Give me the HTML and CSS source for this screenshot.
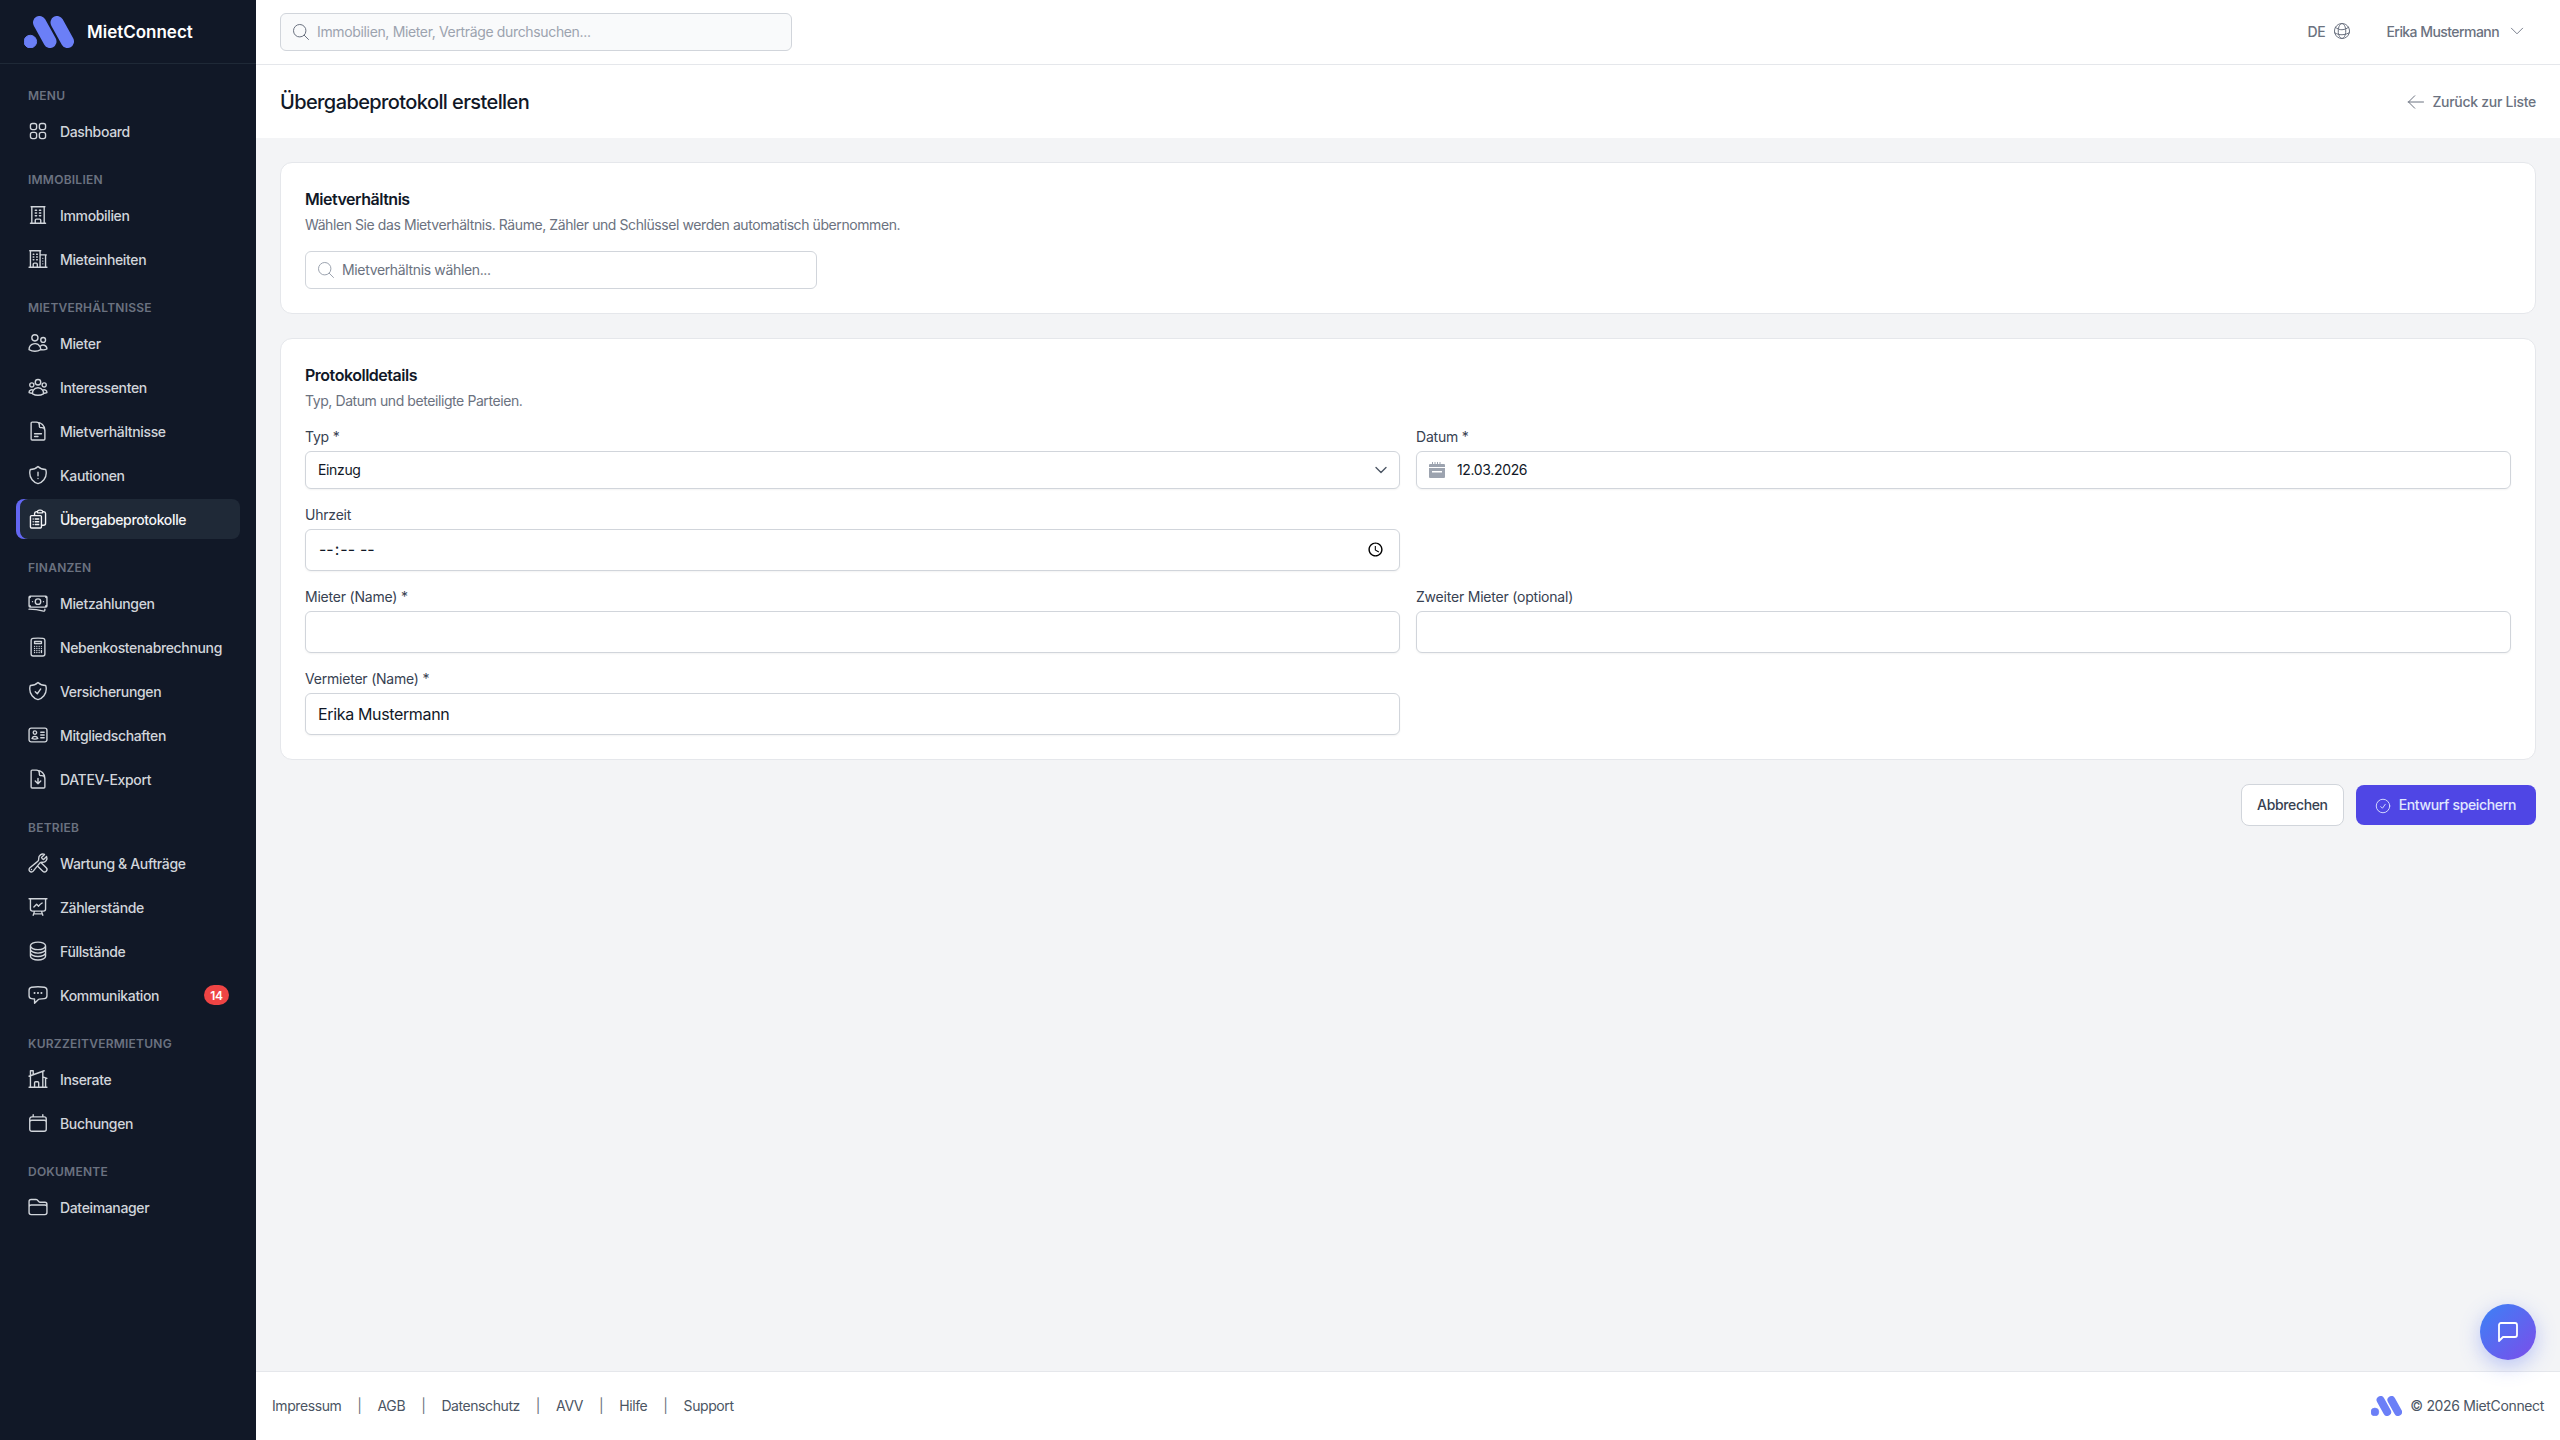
FILE: index.html
```html
<!DOCTYPE html>
<html lang="de">
<head>
<meta charset="utf-8">
<title>Übergabeprotokoll erstellen – MietConnect</title>
<link rel="stylesheet" href="styles.css">
</head>
<body>
<svg class="sprite" aria-hidden="true">
  <symbol id="logo" viewBox="0 0 50 32"><circle cx="6.3" cy="25.6" r="6.3"/><path class="pill" d="M15.5 6.500 26 25.5M33 6.500 43.500 25.500"/></symbol>
  <symbol id="i-dash" viewBox="0 0 24 24"><path d="M3.75 6A2.25 2.25 0 016 3.75h2.25A2.25 2.25 0 0110.5 6v2.25a2.25 2.25 0 01-2.25 2.25H6a2.25 2.25 0 01-2.25-2.25V6zM3.75 15.75A2.25 2.25 0 016 13.5h2.25a2.25 2.25 0 012.25 2.25V18a2.25 2.25 0 01-2.25 2.25H6A2.25 2.25 0 013.75 18v-2.25zM13.5 6a2.25 2.25 0 012.25-2.25H18A2.25 2.25 0 0120.25 6v2.25A2.25 2.25 0 0118 10.5h-2.25a2.25 2.25 0 01-2.25-2.25V6zM13.5 15.75a2.25 2.25 0 012.25-2.25H18a2.25 2.25 0 012.25 2.25V18A2.25 2.25 0 0118 20.25h-2.25A2.25 2.25 0 0113.5 18v-2.25z"/></symbol>
  <symbol id="i-office" viewBox="0 0 24 24"><path d="M3.75 21h16.5M4.5 3h15M5.25 3v18m13.5-18v18M9 6.75h1.5m-1.5 3h1.5m-1.5 3h1.5m3-6H15m-1.5 3H15m-1.5 3H15M9 21v-3.375c0-.621.504-1.125 1.125-1.125h3.75c.621 0 1.125.504 1.125 1.125V21"/></symbol>
  <symbol id="i-office2" viewBox="0 0 24 24"><path d="M2.25 21h19.5m-18-18v18m10.5-18v18m6-13.5V21M6.75 6.75h.75m-.75 3h.75m-.75 3h.75m3-6h.75m-.75 3h.75m-.75 3h.75M6.750 21v-3.375c0-.621.504-1.125 1.125-1.125h2.25c.621 0 1.125.504 1.125 1.125V21M3 3h12m-.75 4.500H21m-3.750 3.750h.008v.008h-.008v-.008zm0 3h.008v.008h-.008v-.008zm0 3h.008v.008h-.008v-.008z"/></symbol>
  <symbol id="i-users" viewBox="0 0 24 24"><path d="M15 19.128a9.380 9.380 0 002.625.372 9.337 9.337 0 004.121-.952 4.125 4.125 0 00-7.533-2.493M15 19.128v-.003c0-1.113-.285-2.160-.786-3.070M15 19.128v.106A12.318 12.318 0 018.624 21c-2.331 0-4.512-.645-6.374-1.766l-.001-.109a6.375 6.375 0 0111.964-3.070M12 6.375a3.375 3.375 0 11-6.750 0 3.375 3.375 0 016.750 0zm8.250 2.250a2.625 2.625 0 11-5.250 0 2.625 2.625 0 015.250 0z"/></symbol>
  <symbol id="i-group" viewBox="0 0 24 24"><path d="M18 18.720a9.094 9.094 0 003.741-.479 3 3 0 00-4.682-2.720m.94 3.198l.001.031c0 .225-.012.447-.037.666A11.944 11.944 0 0112 21c-2.170 0-4.207-.576-5.963-1.584A6.062 6.062 0 016 18.719m12 0a5.971 5.971 0 00-.941-3.197m0 0A5.995 5.995 0 0012 12.750a5.995 5.995 0 00-5.058 2.772m0 0a3 3 0 00-4.681 2.720 8.986 8.986 0 003.740.477m.94-3.197a5.971 5.971 0 00-.94 3.197M15 6.750a3 3 0 11-6 0 3 3 0 016 0zm6 3a2.250 2.250 0 11-4.500 0 2.250 2.250 0 014.500 0zm-13.500 0a2.250 2.250 0 11-4.500 0 2.250 2.250 0 014.500 0z"/></symbol>
  <symbol id="i-doc" viewBox="0 0 24 24"><path d="M19.500 14.250v-2.625a3.375 3.375 0 00-3.375-3.375h-1.500A1.125 1.125 0 0113.500 7.125v-1.500a3.375 3.375 0 00-3.375-3.375H8.250m0 12.750h7.500m-7.500 3H12M10.500 2.250H5.625c-.621 0-1.125.504-1.125 1.125v17.250c0 .621.504 1.125 1.125 1.125h12.750c.621 0 1.125-.504 1.125-1.125V11.250a9 9 0 00-9-9z"/></symbol>
  <symbol id="i-shield-x" viewBox="0 0 24 24"><path d="M12 9v3.750m0-10.036A11.959 11.959 0 013.598 6 11.990 11.990 0 003 9.750c0 5.592 3.824 10.290 9 11.622 5.176-1.332 9-6.030 9-11.622 0-1.310-.210-2.570-.598-3.750h-.152c-3.196 0-6.100-1.249-8.250-3.286zm0 13.036h.008v.008H12v-.008z"/></symbol>
  <symbol id="i-clip" viewBox="0 0 24 24"><path d="M9 12h3.750M9 15h3.750M9 18h3.750m3 .75H18a2.250 2.250 0 002.250-2.250V6.108c0-1.135-.845-2.098-1.976-2.192a48.424 48.424 0 00-1.123-.08m-5.801 0c-.065.21-.1.433-.1.664 0 .414.336.75.75.75h4.500a.75.75 0 00.75-.75 2.250 2.250 0 00-.1-.664m-5.800 0A2.251 2.251 0 0113.500 2.250H15c1.012 0 1.867.668 2.150 1.586m-5.800 0c-.376.023-.75.05-1.124.08C9.095 4.010 8.250 4.973 8.250 6.108V8.250m0 0H4.875c-.621 0-1.125.504-1.125 1.125v11.250c0 .621.504 1.125 1.125 1.125h9.750c.621 0 1.125-.504 1.125-1.125V9.375c0-.621-.504-1.125-1.125-1.125H8.250zM6.750 12h.008v.008H6.750V12zm0 3h.008v.008H6.750V15zm0 3h.008v.008H6.750V18z"/></symbol>
  <symbol id="i-money" viewBox="0 0 24 24"><path d="M2.250 18.750a60.070 60.070 0 0115.797 2.101c.727.198 1.453-.342 1.453-1.096V18.750M3.750 4.500v.75A.75.75 0 013 6h-.75m0 0v-.375c0-.621.504-1.125 1.125-1.125H20.250M2.250 6v9m18-10.500v.75c0 .414.336.75.75.75h.75m-1.500-1.500h.375c.621 0 1.125.504 1.125 1.125v9.750c0 .621-.504 1.125-1.125 1.125h-.375m1.500-1.500H21a.75.75 0 00-.75.75v.75m0 0H3.750m0 0h-.375a1.125 1.125 0 01-1.125-1.125V15m1.500 1.500v-.75A.75.75 0 003 15h-.75M15 10.500a3 3 0 11-6 0 3 3 0 016 0zm3 0h.008v.008H18V10.500zm-12 0h.008v.008H6V10.500z"/></symbol>
  <symbol id="i-calc" viewBox="0 0 24 24"><path d="M15.750 15.750V18m-7.500-6.750h.008v.008H8.250v-.008zm0 2.250h.008v.008H8.250V13.500zm0 2.250h.008v.008H8.250v-.008zm0 2.250h.008v.008H8.250V18zm2.498-6.750h.007v.008h-.007v-.008zm0 2.250h.007v.008h-.007V13.500zm0 2.250h.007v.008h-.007v-.008zm0 2.250h.007v.008h-.007V18zm2.504-6.750h.008v.008h-.008v-.008zm0 2.250h.008v.008h-.008V13.500zm0 2.250h.008v.008h-.008v-.008zm0 2.250h.008v.008h-.008V18zm2.498-6.750h.008v.008h-.008v-.008zm0 2.250h.008v.008h-.008V13.500zM8.250 6h7.500v2.250h-7.500V6zM12 2.250c-1.892 0-3.758.11-5.593.322C5.307 2.700 4.500 3.650 4.500 4.757V19.500a2.250 2.250 0 002.250 2.250h10.500a2.250 2.250 0 002.250-2.250V4.757c0-1.108-.806-2.057-1.907-2.185A48.507 48.507 0 0012 2.250z"/></symbol>
  <symbol id="i-shield-c" viewBox="0 0 24 24"><path d="M9 12.750L11.250 15 15 9.750m-3-7.036A11.959 11.959 0 013.598 6 11.990 11.990 0 003 9.749c0 5.592 3.824 10.290 9 11.623 5.176-1.332 9-6.030 9-11.622 0-1.310-.21-2.571-.598-3.751h-.152c-3.196 0-6.100-1.248-8.250-3.285z"/></symbol>
  <symbol id="i-id" viewBox="0 0 24 24"><path d="M15 9h3.750M15 12h3.750M15 15h3.750M4.500 19.500h15a2.250 2.250 0 002.250-2.250V6.750A2.250 2.250 0 0019.500 4.500h-15a2.250 2.250 0 00-2.250 2.250v10.500A2.250 2.250 0 004.500 19.500zm6-10.125a1.875 1.875 0 11-3.750 0 1.875 1.875 0 013.750 0zm1.294 6.336a6.721 6.721 0 01-3.170.789 6.721 6.721 0 01-3.168-.789 3.376 3.376 0 016.338 0z"/></symbol>
  <symbol id="i-docdown" viewBox="0 0 24 24"><path d="M19.500 14.250v-2.625a3.375 3.375 0 00-3.375-3.375h-1.500A1.125 1.125 0 0113.500 7.125v-1.500a3.375 3.375 0 00-3.375-3.375H8.250m.75 12l3 3m0 0l3-3m-3 3v-6m-1.500-9H5.625c-.621 0-1.125.504-1.125 1.125v17.250c0 .621.504 1.125 1.125 1.125h12.750c.621 0 1.125-.504 1.125-1.125V11.250a9 9 0 00-9-9z"/></symbol>
  <symbol id="i-wrench" viewBox="0 0 24 24"><path d="M11.420 15.170L17.250 21A2.652 2.652 0 0021 17.250l-5.877-5.877M11.420 15.170l2.496-3.030c.317-.384.74-.626 1.208-.766M11.420 15.170l-4.655 5.653a2.548 2.548 0 11-3.586-3.586l6.837-5.630m5.108-.233c.55-.164 1.163-.188 1.743-.14a4.500 4.500 0 004.486-6.336l-3.276 3.277a3.004 3.004 0 01-2.250-2.250l3.276-3.276a4.500 4.500 0 00-6.336 4.486c.091 1.076-.071 2.264-.904 2.950l-.102.085-1.745 1.437M4.867 19.125h.008v.008h-.008v-.008z"/></symbol>
  <symbol id="i-chart" viewBox="0 0 24 24"><path d="M3.750 3v11.250A2.250 2.250 0 006 16.500h2.250M3.750 3h-1.500m1.500 0h16.500m0 0h1.500m-1.500 0v11.250A2.250 2.250 0 0118 16.500h-2.250m-7.500 0h7.500m-7.500 0l-1 3m8.500-3l1 3m0 0l.5 1.500m-.5-1.500h-9.500m0 0l-.5 1.500m.75-9l3-3 2.148 2.148A12.061 12.061 0 0116.500 7.605"/></symbol>
  <symbol id="i-stack" viewBox="0 0 24 24"><path d="M20.250 6.375c0 2.278-3.694 4.125-8.250 4.125S3.750 8.653 3.750 6.375m16.500 0c0-2.278-3.694-4.125-8.250-4.125S3.750 4.097 3.750 6.375m16.500 0v11.250c0 2.278-3.694 4.125-8.250 4.125s-8.250-1.847-8.250-4.125V6.375m16.500 0v3.750m-16.500-3.750v3.750m16.500 0v3.750C20.250 16.153 16.556 18 12 18s-8.250-1.847-8.250-4.125v-3.750m16.500 0c0 2.278-3.694 4.125-8.250 4.125s-8.250-1.847-8.250-4.125"/></symbol>
  <symbol id="i-chat" viewBox="0 0 24 24"><path d="M8.625 9.750a.375.375 0 11-.75 0 .375.375 0 01.75 0zm0 0H8.250m4.125 0a.375.375 0 11-.75 0 .375.375 0 01.75 0zm0 0H12m4.125 0a.375.375 0 11-.75 0 .375.375 0 01.75 0zm0 0h-.375m-13.500 3.010c0 1.600 1.123 2.994 2.707 3.227 1.087.16 2.185.283 3.293.369V21l4.184-4.183a1.140 1.140 0 01.778-.332 48.294 48.294 0 005.830-.498c1.585-.233 2.708-1.626 2.708-3.228V6.741c0-1.602-1.123-2.995-2.707-3.228A48.394 48.394 0 0012 3c-2.392 0-4.744.175-7.043.513C3.373 3.746 2.250 5.140 2.250 6.741v6.018z"/></symbol>
  <symbol id="i-home" viewBox="0 0 24 24"><path d="M8.250 21v-4.875c0-.621.504-1.125 1.125-1.125h2.250c.621 0 1.125.504 1.125 1.125V21m0 0h4.500V3.545M12.750 21h7.500V10.750M2.250 21h1.500m18 0h-18M2.250 9l4.500-1.636M18.750 3l-1.500.545m0 6.205l3 1m1.500.5l-1.500-.5M6.750 7.364V3h-3v18m3-13.636l10.500-3.819"/></symbol>
  <symbol id="i-cal" viewBox="0 0 24 24"><path d="M6.750 3v2.250M17.250 3v2.250M3 18.750V7.500a2.250 2.250 0 012.250-2.250h13.500A2.250 2.250 0 0121 7.500v11.250m-18 0A2.250 2.250 0 005.250 21h13.500A2.250 2.250 0 0021 18.750m-18 0v-7.500A2.250 2.250 0 015.250 9h13.500A2.250 2.250 0 0121 11.250v7.500"/></symbol>
  <symbol id="i-folder" viewBox="0 0 24 24"><path d="M2.250 12.750V12A2.250 2.250 0 014.500 9.750h15A2.250 2.250 0 0121.750 12v.75m-8.690-6.440l-2.120-2.120a1.500 1.500 0 00-1.061-.44H4.500A2.250 2.250 0 002.250 6v12a2.250 2.250 0 002.250 2.250h15A2.250 2.250 0 0021.750 18V9a2.250 2.250 0 00-2.250-2.250h-5.379a1.500 1.500 0 01-1.060-.44z"/></symbol>
  <symbol id="i-search" viewBox="0 0 24 24"><path d="M21 21l-5.197-5.197m0 0A7.500 7.500 0 105.196 5.196a7.500 7.500 0 0010.607 10.607z"/></symbol>
  <symbol id="i-globe" viewBox="0 0 24 24"><path d="M12 21a9.004 9.004 0 008.716-6.747M12 21a9.004 9.004 0 01-8.716-6.747M12 21c2.485 0 4.500-4.030 4.500-9S14.485 3 12 3m0 18c-2.485 0-4.500-4.030-4.500-9S9.515 3 12 3m0 0a8.997 8.997 0 017.843 4.582M12 3a8.997 8.997 0 00-7.843 4.582m15.686 0A11.953 11.953 0 0112 10.500c-2.998 0-5.740-1.100-7.843-2.918m15.686 0A8.959 8.959 0 0121 12c0 .778-.099 1.533-.284 2.253m0 0A17.919 17.919 0 0112 16.500c-3.162 0-6.133-.815-8.716-2.247m0 0A9.015 9.015 0 013 12c0-1.605.42-3.113 1.157-4.418"/></symbol>
  <symbol id="i-chev" viewBox="0 0 24 24"><path d="M19.500 8.250l-7.500 7.500-7.500-7.500"/></symbol>
  <symbol id="i-back" viewBox="0 0 24 24"><path d="M10.500 19.500L3 12m0 0l7.500-7.500M3 12h18"/></symbol>
  <symbol id="i-check" viewBox="0 0 24 24"><path d="M9 12.750L11.250 15 15 9.750M21 12a9 9 0 11-18 0 9 9 0 0118 0z"/></symbol>
  <symbol id="i-bubble" viewBox="0 0 24 24"><path d="M21 15a2 2 0 01-2 2H7l-4 4V5a2 2 0 012-2h14a2 2 0 012 2z"/></symbol>
  <symbol id="i-calsolid" viewBox="0 0 16 16"><path d="M3 0h1v2h1.500V0h1v2h1.500V0h1v2h1.500V0h1v2H15a1 1 0 0 1 1 1v2H0V3a1 1 0 0 1 1-1h2V0zM0 6h16v9a1 1 0 0 1-1 1H1a1 1 0 0 1-1-1V6zm3 3v1.500h10V9H3z"/></symbol>
</svg>

<div class="app">
  <aside class="sidebar">
    <div class="brand">
      <svg class="brand-logo"><use href="#logo"/></svg>
      <span class="brand-name">MietConnect</span>
    </div>
    <nav class="nav">
      <section class="nav-group">
        <h2 class="nav-title">Menu</h2>
        <a class="nav-item"><svg class="icon"><use href="#i-dash"/></svg>Dashboard</a>
      </section>
      <section class="nav-group">
        <h2 class="nav-title">Immobilien</h2>
        <a class="nav-item"><svg class="icon"><use href="#i-office"/></svg>Immobilien</a>
        <a class="nav-item"><svg class="icon"><use href="#i-office2"/></svg>Mieteinheiten</a>
      </section>
      <section class="nav-group">
        <h2 class="nav-title">Mietverhältnisse</h2>
        <a class="nav-item"><svg class="icon"><use href="#i-users"/></svg>Mieter</a>
        <a class="nav-item"><svg class="icon"><use href="#i-group"/></svg>Interessenten</a>
        <a class="nav-item"><svg class="icon"><use href="#i-doc"/></svg>Mietverhältnisse</a>
        <a class="nav-item"><svg class="icon"><use href="#i-shield-x"/></svg>Kautionen</a>
        <a class="nav-item is-active"><svg class="icon"><use href="#i-clip"/></svg>Übergabeprotokolle</a>
      </section>
      <section class="nav-group">
        <h2 class="nav-title">Finanzen</h2>
        <a class="nav-item"><svg class="icon"><use href="#i-money"/></svg>Mietzahlungen</a>
        <a class="nav-item"><svg class="icon"><use href="#i-calc"/></svg>Nebenkostenabrechnung</a>
        <a class="nav-item"><svg class="icon"><use href="#i-shield-c"/></svg>Versicherungen</a>
        <a class="nav-item"><svg class="icon"><use href="#i-id"/></svg>Mitgliedschaften</a>
        <a class="nav-item"><svg class="icon"><use href="#i-docdown"/></svg>DATEV-Export</a>
      </section>
      <section class="nav-group">
        <h2 class="nav-title">Betrieb</h2>
        <a class="nav-item"><svg class="icon"><use href="#i-wrench"/></svg>Wartung &amp; Aufträge</a>
        <a class="nav-item"><svg class="icon"><use href="#i-chart"/></svg>Zählerstände</a>
        <a class="nav-item"><svg class="icon"><use href="#i-stack"/></svg>Füllstände</a>
        <a class="nav-item"><svg class="icon"><use href="#i-chat"/></svg>Kommunikation<span class="badge">14</span></a>
      </section>
      <section class="nav-group">
        <h2 class="nav-title">Kurzzeitvermietung</h2>
        <a class="nav-item"><svg class="icon"><use href="#i-home"/></svg>Inserate</a>
        <a class="nav-item"><svg class="icon"><use href="#i-cal"/></svg>Buchungen</a>
      </section>
      <section class="nav-group">
        <h2 class="nav-title">Dokumente</h2>
        <a class="nav-item"><svg class="icon"><use href="#i-folder"/></svg>Dateimanager</a>
      </section>
    </nav>
  </aside>

  <div class="main">
    <header class="topbar">
      <div class="global-search">
        <svg class="icon-search"><use href="#i-search"/></svg>
        <input class="plain-input" type="text" placeholder="Immobilien, Mieter, Verträge durchsuchen...">
      </div>
      <div class="topbar-right">
        <button class="top-btn lang">DE<svg class="icon-globe"><use href="#i-globe"/></svg></button>
        <button class="top-btn user">Erika Mustermann<svg class="icon-chev"><use href="#i-chev"/></svg></button>
      </div>
    </header>

    <div class="page-head">
      <h1 class="page-title">Übergabeprotokoll erstellen</h1>
      <a class="back-link"><svg class="icon-back"><use href="#i-back"/></svg>Zurück zur Liste</a>
    </div>

    <main class="content">
      <section class="card">
        <h2 class="card-title">Mietverhältnis</h2>
        <p class="card-sub">Wählen Sie das Mietverhältnis. Räume, Zähler und Schlüssel werden automatisch übernommen.</p>
        <div class="tenancy-search">
          <svg class="icon-search"><use href="#i-search"/></svg>
          <input class="plain-input" type="text" placeholder="Mietverhältnis wählen...">
        </div>
      </section>

      <section class="card">
        <h2 class="card-title">Protokolldetails</h2>
        <p class="card-sub">Typ, Datum und beteiligte Parteien.</p>
        <div class="form-grid">
          <div class="field">
            <label class="label">Typ *</label>
            <div class="select-wrap">
              <select class="control control-sm"><option>Einzug</option></select>
              <svg class="select-chev"><use href="#i-chev"/></svg>
            </div>
          </div>
          <div class="field">
            <label class="label">Datum *</label>
            <div class="date-box">
              <svg class="cal-solid"><use href="#i-calsolid"/></svg>
              <input class="plain-input date-input" type="text" value="12.03.2026">
            </div>
          </div>
          <div class="field">
            <label class="label">Uhrzeit</label>
            <input class="control" type="time">
          </div>
          <div class="field"></div>
          <div class="field">
            <label class="label">Mieter (Name) *</label>
            <input class="control" type="text">
          </div>
          <div class="field">
            <label class="label">Zweiter Mieter (optional)</label>
            <input class="control" type="text">
          </div>
          <div class="field">
            <label class="label">Vermieter (Name) *</label>
            <input class="control" type="text" value="Erika Mustermann">
          </div>
        </div>
      </section>

      <div class="actions">
        <button class="btn btn-secondary">Abbrechen</button>
        <button class="btn btn-primary"><svg class="icon-check"><use href="#i-check"/></svg>Entwurf speichern</button>
      </div>
    </main>

    <footer class="footer">
      <div class="footer-links">
        <a>Impressum</a><span class="sep">|</span>
        <a>AGB</a><span class="sep">|</span>
        <a>Datenschutz</a><span class="sep">|</span>
        <a>AVV</a><span class="sep">|</span>
        <a>Hilfe</a><span class="sep">|</span>
        <a>Support</a>
      </div>
      <div class="footer-copy">
        <svg class="footer-logo"><use href="#logo"/></svg>
        <span>© 2026 MietConnect</span>
      </div>
    </footer>
  </div>
</div>

<button class="fab" aria-label="Chat"><svg class="fab-icon"><use href="#i-bubble"/></svg></button>
</body>
</html>
```
FILE: styles.css
```css
* { box-sizing: border-box; }
html, body { margin: 0; height: 100%; }
body {
  font-family: Inter, "Noto Sans", sans-serif;
  font-size: 14px;
  letter-spacing: -0.025em;
  color: #111827;
  background: #f3f4f6;
}
.sprite { display: none; }
h1, h2, p { margin: 0; }
a { color: inherit; text-decoration: none; }
button, input, select { font-family: inherit; letter-spacing: inherit; }

.icon, .icon-search, .icon-globe, .icon-chev, .icon-back, .icon-check, .select-chev, .fab-icon {
  fill: none;
  stroke: currentColor;
  stroke-width: 1.2;
  stroke-linecap: round;
  stroke-linejoin: round;
  flex: none;
}
.icon { width: 22px; height: 22px; stroke-width: 1.5; margin-left: -1px; }
.icon-search { width: 20px; height: 20px; margin-left: -2px; }
.icon-globe { width: 20px; height: 20px; }
.icon-chev { width: 18px; height: 18px; }
.icon-back { width: 20px; height: 20px; }
.icon-check { width: 18px; height: 18px; }

.app { display: flex; height: 100vh; }

/* Sidebar */
.sidebar {
  width: 256px;
  flex: none;
  background: #111827;
  color: #d1d5db;
  display: flex;
  flex-direction: column;
}
.brand {
  height: 64px;
  flex: none;
  display: flex;
  align-items: center;
  gap: 13px;
  padding: 0 24px;
  border-bottom: 1px solid #1f2937;
}
.brand-logo { width: 50px; height: 32px; fill: #6b7ff7; stroke: #6b7ff7; flex: none; }
.brand-name { color: #fff; font-size: 17px; font-weight: 600; letter-spacing: 0; }
.nav { padding: 22px 16px 0; display: flex; flex-direction: column; gap: 19px; }
.nav-group { display: flex; flex-direction: column; gap: 4px; }
.nav-title {
  font-size: 12px;
  line-height: 20px;
  font-weight: 600;
  text-transform: uppercase;
  letter-spacing: 0.02em;
  color: #6b7280;
  padding-left: 12px;
  margin-bottom: 1px;
}
.nav-item {
  height: 40px;
  display: flex;
  align-items: center;
  gap: 11px;
  padding: 0 12px;
  border-radius: 8px;
  font-weight: 450;
  font-size: 14px;
  white-space: nowrap;
}
.nav-item.is-active {
  background: #1f2937;
  color: #f3f4f6;
  box-shadow: inset 4px 0 0 #6366f1;
}
.badge {
  margin-left: auto;
  margin-right: -1px;
  width: 25px;
  height: 20px;
  border-radius: 10px;
  background: #ef4444;
  color: #fff;
  font-size: 12px;
  font-weight: 600;
  display: flex;
  align-items: center;
  justify-content: center;
}

/* Main */
.main { flex: 1; min-width: 0; display: flex; flex-direction: column; }
.topbar {
  height: 65px;
  flex: none;
  background: #fff;
  border-bottom: 1px solid #e5e7eb;
  padding: 0 24px;
  display: flex;
  align-items: center;
  justify-content: space-between;
}
.global-search {
  width: 512px;
  height: 38px;
  display: flex;
  align-items: center;
  gap: 6px;
  padding: 0 12px;
  background: #f9fafb;
  border: 1px solid #d1d5db;
  border-radius: 6px;
  color: #6b7280;
}
.plain-input {
  flex: 1;
  min-width: 0;
  border: 0;
  outline: 0;
  background: transparent;
  padding: 0 0 2px;
  font-size: 14px;
  color: #111827;
}
.plain-input::placeholder { color: #9ca3af; }
.topbar-right { display: flex; align-items: center; gap: 34px; padding: 0 10px 2px 0; }
.top-btn {
  border: 0;
  background: none;
  padding: 0;
  display: flex;
  align-items: center;
  gap: 7px;
  font-size: 14px;
  font-weight: 450;
  color: #6b7280;
}
.user { gap: 9px; letter-spacing: -0.04em; }

.page-head {
  height: 73px;
  flex: none;
  background: #fff;
  padding: 0 24px;
  display: flex;
  align-items: center;
  justify-content: space-between;
}
.page-title { font-size: 20px; font-weight: 500; color: #111827; letter-spacing: -0.03em; }
.back-link { display: flex; align-items: center; gap: 6px; font-size: 14px; font-weight: 450; color: #6b7280; letter-spacing: -0.02em; }

.content {
  flex: 1;
  min-height: 0;
  padding: 24px;
  display: flex;
  flex-direction: column;
  gap: 24px;
}
.card {
  background: #fff;
  border: 1px solid #e5e7eb;
  border-radius: 12px;
  padding: 24px;
}
.card-title { font-size: 16px; line-height: 24px; font-weight: 600; color: #111827; letter-spacing: -0.03em; }
.card-sub { font-size: 14px; line-height: 20px; margin-top: 4px; color: #6b7280; letter-spacing: -0.03em; }
.tenancy-search {
  width: 512px;
  height: 38px;
  margin-top: 16px;
  display: flex;
  align-items: center;
  gap: 6px;
  padding: 0 12px;
  border: 1px solid #d1d5db;
  border-radius: 6px;
  color: #9ca3af;
}
.tenancy-search .plain-input::placeholder { color: #6b7280; }

.form-grid {
  margin-top: 16px;
  display: grid;
  grid-template-columns: 1fr 1fr;
  gap: 16px;
}
.label { display: block; font-size: 14px; line-height: 20px; font-weight: 400; color: #374151; margin-bottom: 4px; letter-spacing: -0.015em; }
.control {
  display: block;
  width: 100%;
  height: 42px;
  padding: 0 12px 1px;
  background: #fff;
  border: 1px solid #d1d5db;
  border-radius: 6px;
  font-size: 16px;
  color: #111827;
  outline: 0;
  box-shadow: 0 1px 2px rgba(0,0,0,.05);
}
.control-sm { height: 38px; font-size: 14px; appearance: none; padding-bottom: 2px; }
.select-wrap { position: relative; }
.select-chev {
  position: absolute;
  right: 11px;
  top: 11px;
  width: 16px;
  height: 16px;
  stroke-width: 2;
  color: #4b5563;
  pointer-events: none;
}
.date-box {
  height: 38px;
  display: flex;
  align-items: center;
  gap: 12px;
  padding: 0 12px;
  border: 1px solid #d1d5db;
  border-radius: 6px;
  box-shadow: 0 1px 2px rgba(0,0,0,.05);
}
.cal-solid { width: 16px; height: 16px; fill: #9ca3af; flex: none; }

.actions { display: flex; justify-content: flex-end; align-items: center; gap: 12px; }
.btn {
  height: 42px;
  border-radius: 8px;
  font-size: 14px;
  font-weight: 450;
  display: flex;
  align-items: center;
  gap: 7px;
  padding-bottom: 2px;
}
.btn-secondary { background: #fff; border: 1px solid #d1d5db; color: #374151; padding-left: 15px; padding-right: 15px; }
.btn-primary { height: 40px; background: #4f46e5; border: 0; color: #e0e7ff; padding-left: 18px; padding-right: 20px; }
.btn-primary svg { margin-top: 2px; }

.footer {
  height: 69px;
  flex: none;
  background: #fff;
  border-top: 1px solid #e5e7eb;
  padding: 0 16px 2px;
  display: flex;
  align-items: center;
  justify-content: space-between;
  color: #4b5563;
}
.footer-links { display: flex; align-items: center; gap: 16px; letter-spacing: -0.03em; }
.sep { color: #6b7280; }
.footer-copy { display: flex; align-items: center; gap: 8px; }
.footer-logo { width: 31px; height: 20px; fill: #6b7ff7; stroke: #6b7ff7; flex: none; margin-top: 2px; }
.pill { fill: none; stroke-width: 13; stroke-linecap: round; }

.fab {
  position: fixed;
  right: 24px;
  bottom: 80px;
  width: 56px;
  height: 56px;
  border: 0;
  border-radius: 50%;
  background: linear-gradient(135deg, #3b82f6, #7c4dea);
  color: #fff;
  display: flex;
  align-items: center;
  justify-content: center;
  box-shadow: 0 6px 20px rgba(79, 110, 247, .35);
}
.fab-icon { width: 24px; height: 24px; stroke-width: 1.8; }
```
